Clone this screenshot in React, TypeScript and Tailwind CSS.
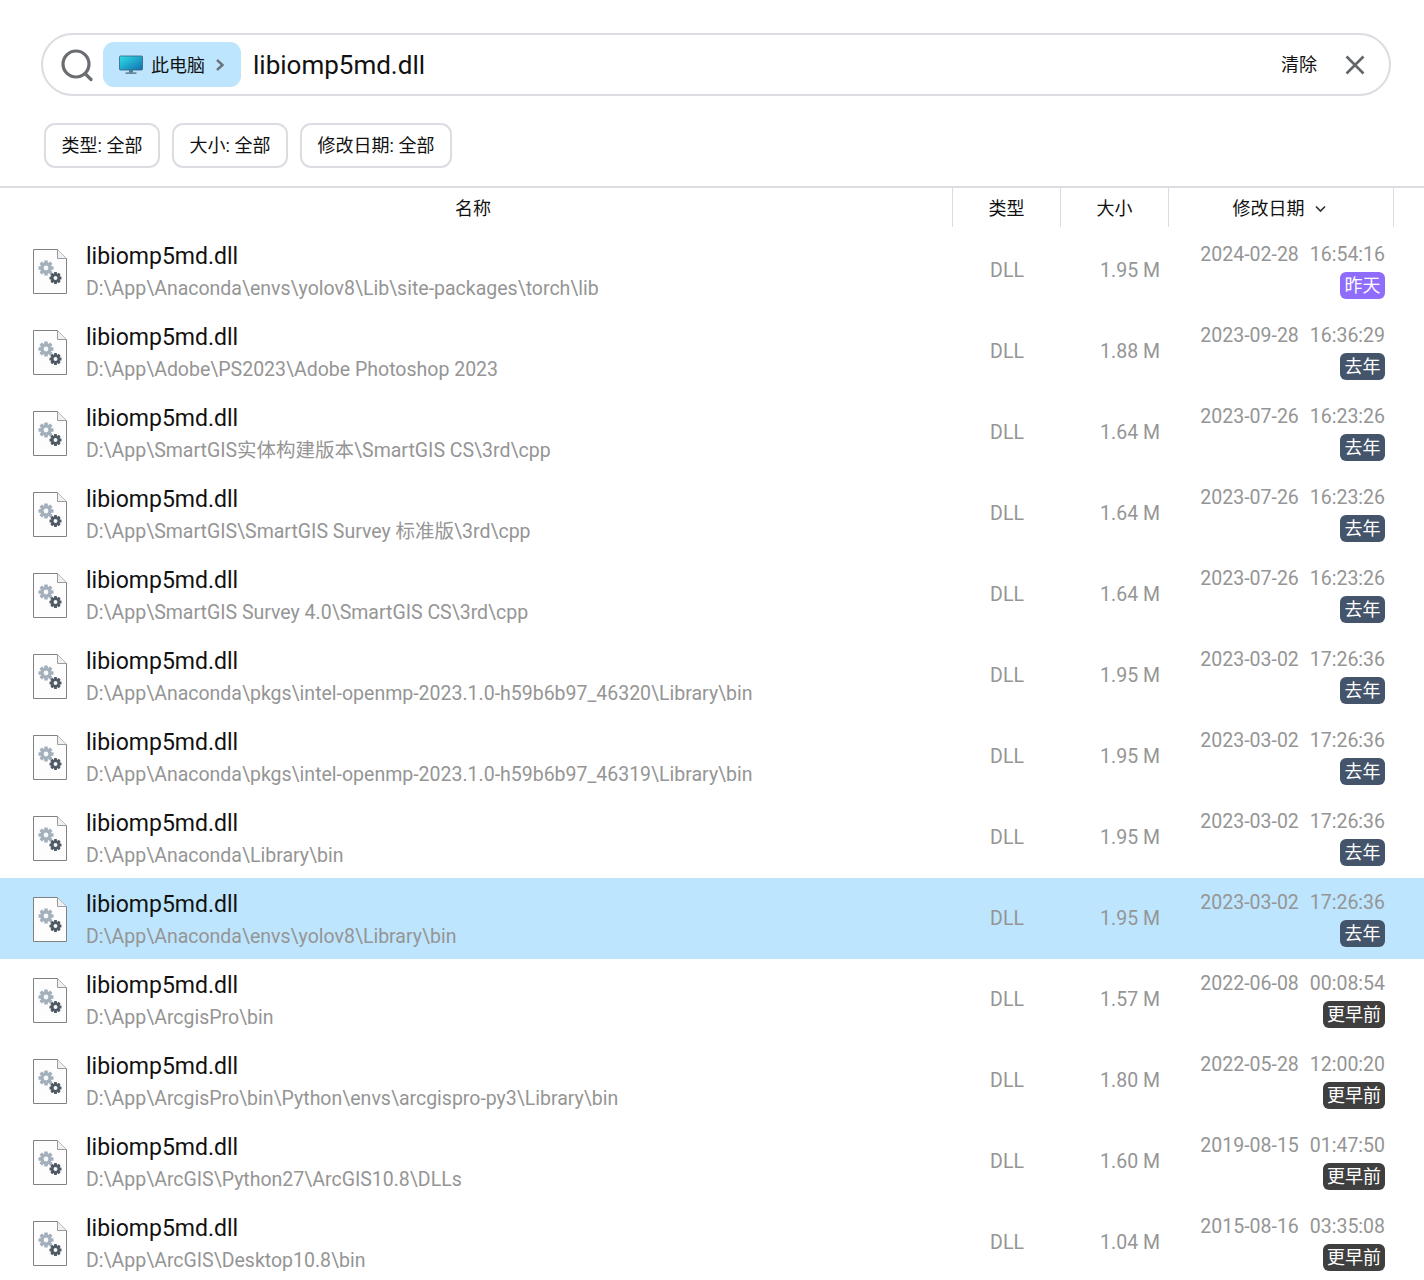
const rows: [string, string, string, string, string, string][] = [
  ["D:\\App\\Anaconda\\envs\\yolov8\\Lib\\site-packages\\torch\\lib", "1.95 M", "2024-02-28", "16:54:16", "昨天", "a"],
  ["D:\\App\\Adobe\\PS2023\\Adobe Photoshop 2023", "1.88 M", "2023-09-28", "16:36:29", "去年", "b"],
  ["D:\\App\\SmartGIS实体构建版本\\SmartGIS CS\\3rd\\cpp", "1.64 M", "2023-07-26", "16:23:26", "去年", "b"],
  ["D:\\App\\SmartGIS\\SmartGIS Survey 标准版\\3rd\\cpp", "1.64 M", "2023-07-26", "16:23:26", "去年", "b"],
  ["D:\\App\\SmartGIS Survey 4.0\\SmartGIS CS\\3rd\\cpp", "1.64 M", "2023-07-26", "16:23:26", "去年", "b"],
  ["D:\\App\\Anaconda\\pkgs\\intel-openmp-2023.1.0-h59b6b97_46320\\Library\\bin", "1.95 M", "2023-03-02", "17:26:36", "去年", "b"],
  ["D:\\App\\Anaconda\\pkgs\\intel-openmp-2023.1.0-h59b6b97_46319\\Library\\bin", "1.95 M", "2023-03-02", "17:26:36", "去年", "b"],
  ["D:\\App\\Anaconda\\Library\\bin", "1.95 M", "2023-03-02", "17:26:36", "去年", "b"],
  ["D:\\App\\Anaconda\\envs\\yolov8\\Library\\bin", "1.95 M", "2023-03-02", "17:26:36", "去年", "b"],
  ["D:\\App\\ArcgisPro\\bin", "1.57 M", "2022-06-08", "00:08:54", "更早前", "c"],
  ["D:\\App\\ArcgisPro\\bin\\Python\\envs\\arcgispro-py3\\Library\\bin", "1.80 M", "2022-05-28", "12:00:20", "更早前", "c"],
  ["D:\\App\\ArcGIS\\Python27\\ArcGIS10.8\\DLLs", "1.60 M", "2019-08-15", "01:47:50", "更早前", "c"],
  ["D:\\App\\ArcGIS\\Desktop10.8\\bin", "1.04 M", "2015-08-16", "03:35:08", "更早前", "c"],
];

function Gear({ cx, cy, r, fill }: { cx: number; cy: number; r: number; fill: string }) {
  const teeth = [0, 45, 90, 135];
  return (
    <g fill={fill}>
      {teeth.map((a) => (
        <rect key={a} x={cx - r * 0.3} y={cy - r * 1.25} width={r * 0.6} height={r * 2.5} rx={0.5} transform={`rotate(${a} ${cx} ${cy})`} />
      ))}
      <circle cx={cx} cy={cy} r={r * 0.95} />
      <circle cx={cx} cy={cy} r={r * 0.4} fill="#f7f8f9" />
    </g>
  );
}

function FileIcon() {
  return (
    <svg width="36" height="46" viewBox="0 0 36 46" className="block">
      <path d="M0.5 0.5H24.5L33.5 9.5V44.5H0.5Z" fill="#fdfdfd" stroke="#7e8285" />
      <path d="M24.5 0.5V9.5H33.5" fill="#f0f0f0" stroke="#9a9da0" />
      <Gear cx={13} cy={19} r={6} fill="#a4afbc" />
      <Gear cx={22.5} cy={29} r={4.8} fill="#4f5a64" />
    </svg>
  );
}

function Monitor() {
  return (
    <svg width="24" height="20" viewBox="0 0 24 20" className="block">
      <defs>
        <linearGradient id="scr" x1="0" y1="0" x2="1" y2="1">
          <stop offset="0" stopColor="#2fe0e8" />
          <stop offset="1" stopColor="#0f6fb0" />
        </linearGradient>
      </defs>
      <rect x="0.5" y="1" width="23" height="14" rx="1" fill="url(#scr)" stroke="#3c5f78" strokeWidth="0.8" />
      <rect x="10" y="15" width="4" height="2.5" fill="#4d7f96" />
      <rect x="6.5" y="17.5" width="11" height="1.2" fill="#48606f" />
    </svg>
  );
}

function Chip({ w, children }: { w: string; children: string }) {
  return (
    <div className={`${w} h-[45px] flex items-center justify-center rounded-[11px] border-2 border-[#dcdce2] text-[18px] text-[#111]`}>
      {children}
    </div>
  );
}

const badgeColor: Record<string, string> = {
  a: "bg-[#8f6cfb] w-[45px]",
  b: "bg-[#44546a] w-[45px]",
  c: "bg-[#3f3f3f] w-[62px]",
};

export default function App() {
  return (
    <div
      className="w-[1424px] h-[1280px] overflow-hidden bg-white"
      style={{ fontFamily: 'Roboto, "Noto Sans CJK SC", sans-serif' }}
    >
      <div className="pl-[41px] pr-[33px] pt-[33px]">
        <div className="h-[63px] rounded-full border-2 border-[#dcdce2] flex items-center pl-[17px] pr-[24px]">
          <svg width="34" height="34" viewBox="0 0 34 34" fill="none" stroke="#696d72" strokeWidth="3.2" className="block">
            <circle cx="16" cy="16" r="13" />
            <path d="M25.5 26L31 31.5" strokeLinecap="round" />
          </svg>
          <div className="ml-[9px] w-[138px] h-[45px] rounded-[11px] bg-[#bde5fe] flex items-center pl-[16px]">
            <Monitor />
            <span className="ml-[8px] text-[18px] pt-[1px] text-[#111]">此电脑</span>
            <svg width="10" height="14" viewBox="0 0 10 14" fill="none" stroke="#6d7378" strokeWidth="2.4" className="ml-[10px] block">
              <path d="M2 2L7.5 7L2 12" />
            </svg>
          </div>
          <span className="ml-[12px] text-[26px] leading-none text-[#111]">libiomp5md.dll</span>
          <span className="ml-auto text-[18px] text-[#111]">清除</span>
          <svg width="20" height="20" viewBox="0 0 20 20" fill="none" stroke="#62666b" strokeWidth="2.6" className="ml-[28px] block">
            <path d="M1.5 1.5L18.5 18.5M18.5 1.5L1.5 18.5" />
          </svg>
        </div>
      </div>

      <div className="flex gap-3 pl-[44px] pt-[27px]">
        <Chip w="w-[116px]">类型: 全部</Chip>
        <Chip w="w-[116px]">大小: 全部</Chip>
        <Chip w="w-[152px]">修改日期: 全部</Chip>
      </div>

      <div className="mt-[18px] border-t-2 border-[#dcdce2] flex h-[41px] text-[18px] text-[#111]">
        <div className="w-[953px] border-r border-[#dcdcdc] flex items-center justify-center pr-[6px] pt-[2px]">名称</div>
        <div className="w-[108px] border-r border-[#dcdcdc] flex items-center justify-center pt-[2px]">类型</div>
        <div className="w-[108px] border-r border-[#dcdcdc] flex items-center justify-center pt-[2px]">大小</div>
        <div className="w-[225px] border-r border-[#dcdcdc] flex items-center justify-center pr-[4px] pt-[2px]">
          修改日期
          <svg width="11" height="8" viewBox="0 0 11 8" fill="none" stroke="#333" strokeWidth="1.7" className="ml-[10px] block">
            <path d="M1 1.5L5.5 6L10 1.5" />
          </svg>
        </div>
      </div>

      <div className="mt-[3px]">
        {rows.map(([path, size, date, time, badge, kind], i) => (
          <div key={i} className={`h-[81px] flex items-center ${i === 8 ? "bg-[#bde5fe]" : ""}`}>
            <div className="w-[86px] pl-[33px] pt-[3px]"><FileIcon /></div>
            <div className="w-[867px] flex flex-col">
              <div className="h-[32px] text-[23px] leading-[35px] text-[#111]">libiomp5md.dll</div>
              <div className="h-[32px] pt-[2px] text-[19.5px] leading-[32px] text-[#959595]">{path}</div>
            </div>
            <div className="w-[108px] text-center text-[19.5px] text-[#959595]">DLL</div>
            <div className="w-[99px] text-right text-[19.5px] text-[#959595]">{size}</div>
            <div className="w-[225px] flex flex-col items-end">
              <div className="h-[28px] text-[19.5px] leading-[30px] text-[#959595] flex gap-[11px]"><span>{date}</span><span>{time}</span></div>
              <div className={`mt-[4px] mb-[2px] h-[27px] rounded-[6px] flex items-center justify-center text-[18px] leading-none text-white ${badgeColor[kind]}`}>
                {badge}
              </div>
            </div>
          </div>
        ))}
      </div>
    </div>
  );
}
